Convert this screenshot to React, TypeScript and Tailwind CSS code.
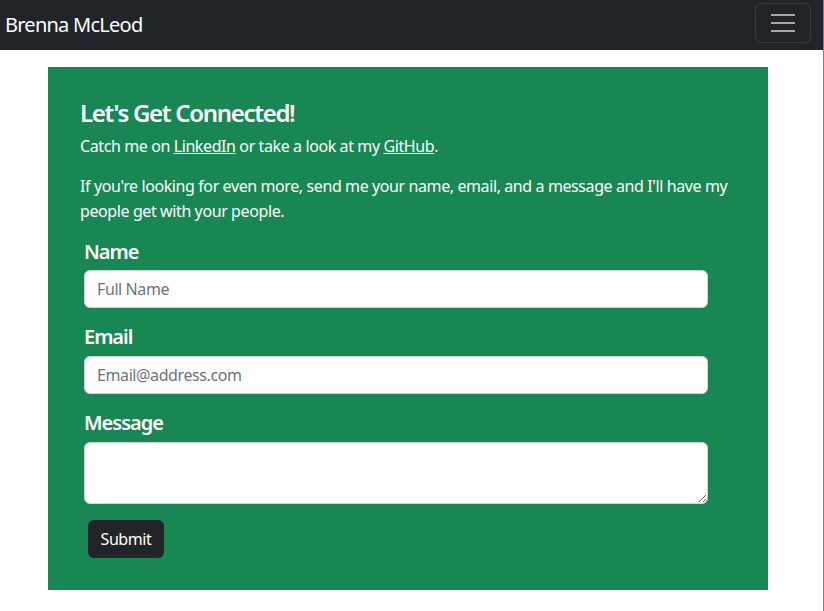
import React from "react";

export default function App() {
  return (
    <div
      className="min-h-[611px] w-full bg-white border-r border-[#5f8a94] tracking-[-0.4px]"
      style={{ fontFamily: '"Noto Sans", "Open Sans", sans-serif' }}
    >
      <nav className="h-[50px] bg-[#212529] flex items-center justify-between pl-[5px] pr-[12px]">
        <span className="text-white text-[20px] leading-none tracking-[-0.75px]">Brenna McLeod</span>
        <button className="w-[56px] h-[40px] mt-[-5px] rounded-[6px] border border-white/10 flex flex-col items-center justify-center gap-[6px]">
          <span className="block w-[24px] h-[2px] bg-[#a3a5a7]" />
          <span className="block w-[24px] h-[2px] bg-[#a3a5a7]" />
          <span className="block w-[24px] h-[2px] bg-[#a3a5a7]" />
        </button>
      </nav>
      <div className="pt-[17px] pl-[48px]">
        <div className="w-[720px] bg-[#198754] text-white pt-[31px] pb-[32px] px-[32px]">
          <h2 className="text-[24px] leading-[29px] font-semibold mb-[7px] tracking-[-1.3px]">Let's Get Connected!</h2>
          <p className="text-[16px] leading-[24px]">
            Catch me on <a className="underline" href="#">LinkedIn</a> or take a look at my{" "}
            <a className="underline" href="#">GitHub</a>.
          </p>
          <p className="text-[16px] leading-[25px] mt-[16px] w-[656px]">
            If you're looking for even more, send me your name, email, and a message and I'll have my people get with your people.
          </p>
          <form className="ml-[4px] w-[624px]" onSubmit={(e) => e.preventDefault()}>
            <label className="block mt-[16px] mb-[6px] text-[20px] leading-[24px] font-semibold tracking-[-1px]">Name</label>
            <input
              className="block w-full h-[38px] rounded-[6px] border border-[#ced4da] bg-white px-[12px] text-[16px] text-[#212529] placeholder:text-[#6c757d] outline-none"
              placeholder="Full Name"
            />
            <label className="block mt-[17px] mb-[7px] text-[20px] leading-[24px] font-semibold tracking-[-1px]">Email</label>
            <input
              className="block w-full h-[38px] rounded-[6px] border border-[#ced4da] bg-white px-[12px] text-[16px] text-[#212529] placeholder:text-[#6c757d] outline-none"
              placeholder="Email@address.com"
            />
            <label className="block mt-[17px] mb-[7px] text-[20px] leading-[24px] font-semibold tracking-[-1px]">Message</label>
            <textarea className="block w-full h-[62px] rounded-[6px] border border-[#ced4da] bg-white px-[12px] py-[6px] text-[16px] text-[#212529] outline-none" />
            <button
              type="submit"
              className="mt-[16px] ml-[4px] h-[38px] w-[76px] rounded-[6px] bg-[#212529] text-white text-[16px]"
            >
              Submit
            </button>
          </form>
        </div>
      </div>
    </div>
  );
}
